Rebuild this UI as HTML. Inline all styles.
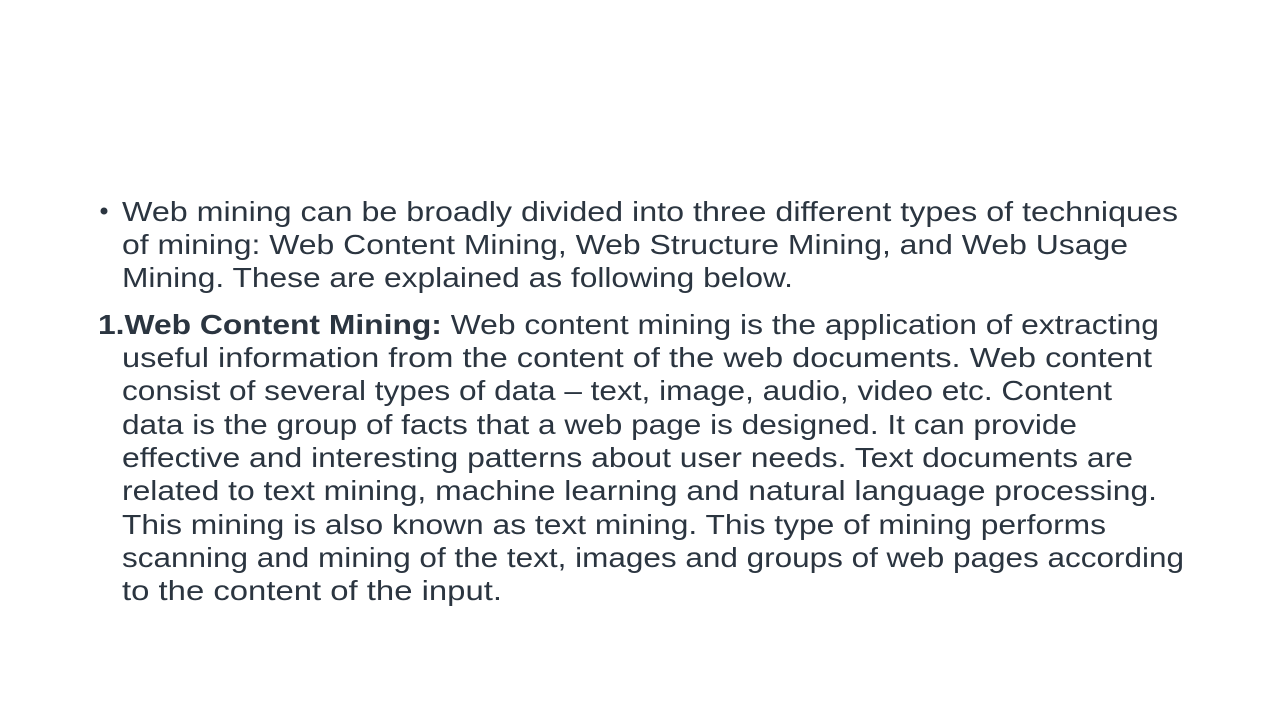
<!DOCTYPE html>
<html><head><meta charset="utf-8"><style>
html,body{margin:0;padding:0;background:#fff;width:1280px;height:720px;overflow:hidden}
svg{display:block}
text{font-family:"Liberation Sans",sans-serif;font-size:28px;fill:#2b3540}
</style></head><body>
<svg width="1280" height="720" viewBox="0 0 1280 720">
<circle cx="104" cy="211" r="3.5" fill="#2b3540"/>
<text x="122" y="221" textLength="1056" lengthAdjust="spacingAndGlyphs">Web mining can be broadly divided into three different types of techniques</text>
<text x="122" y="254" textLength="1006" lengthAdjust="spacingAndGlyphs">of mining: Web Content Mining, Web Structure Mining, and Web Usage</text>
<text x="122" y="287" textLength="671" lengthAdjust="spacingAndGlyphs">Mining. These are explained as following below.</text>
<text x="98" y="334" textLength="1061" lengthAdjust="spacingAndGlyphs"><tspan font-weight="bold">1.Web Content Mining:</tspan> Web content mining is the application of extracting</text>
<text x="122" y="367" textLength="1030" lengthAdjust="spacingAndGlyphs">useful information from the content of the web documents. Web content</text>
<text x="122" y="400" textLength="990" lengthAdjust="spacingAndGlyphs">consist of several types of data – text, image, audio, video etc. Content</text>
<text x="122" y="434" textLength="955" lengthAdjust="spacingAndGlyphs">data is the group of facts that a web page is designed. It can provide</text>
<text x="122" y="467" textLength="1011" lengthAdjust="spacingAndGlyphs">effective and interesting patterns about user needs. Text documents are</text>
<text x="122" y="500" textLength="1035" lengthAdjust="spacingAndGlyphs">related to text mining, machine learning and natural language processing.</text>
<text x="122" y="534" textLength="984" lengthAdjust="spacingAndGlyphs">This mining is also known as text mining. This type of mining performs</text>
<text x="122" y="567" textLength="1062" lengthAdjust="spacingAndGlyphs">scanning and mining of the text, images and groups of web pages according</text>
<text x="122" y="600" textLength="380" lengthAdjust="spacingAndGlyphs">to the content of the input.</text>
</svg>
</body></html>
